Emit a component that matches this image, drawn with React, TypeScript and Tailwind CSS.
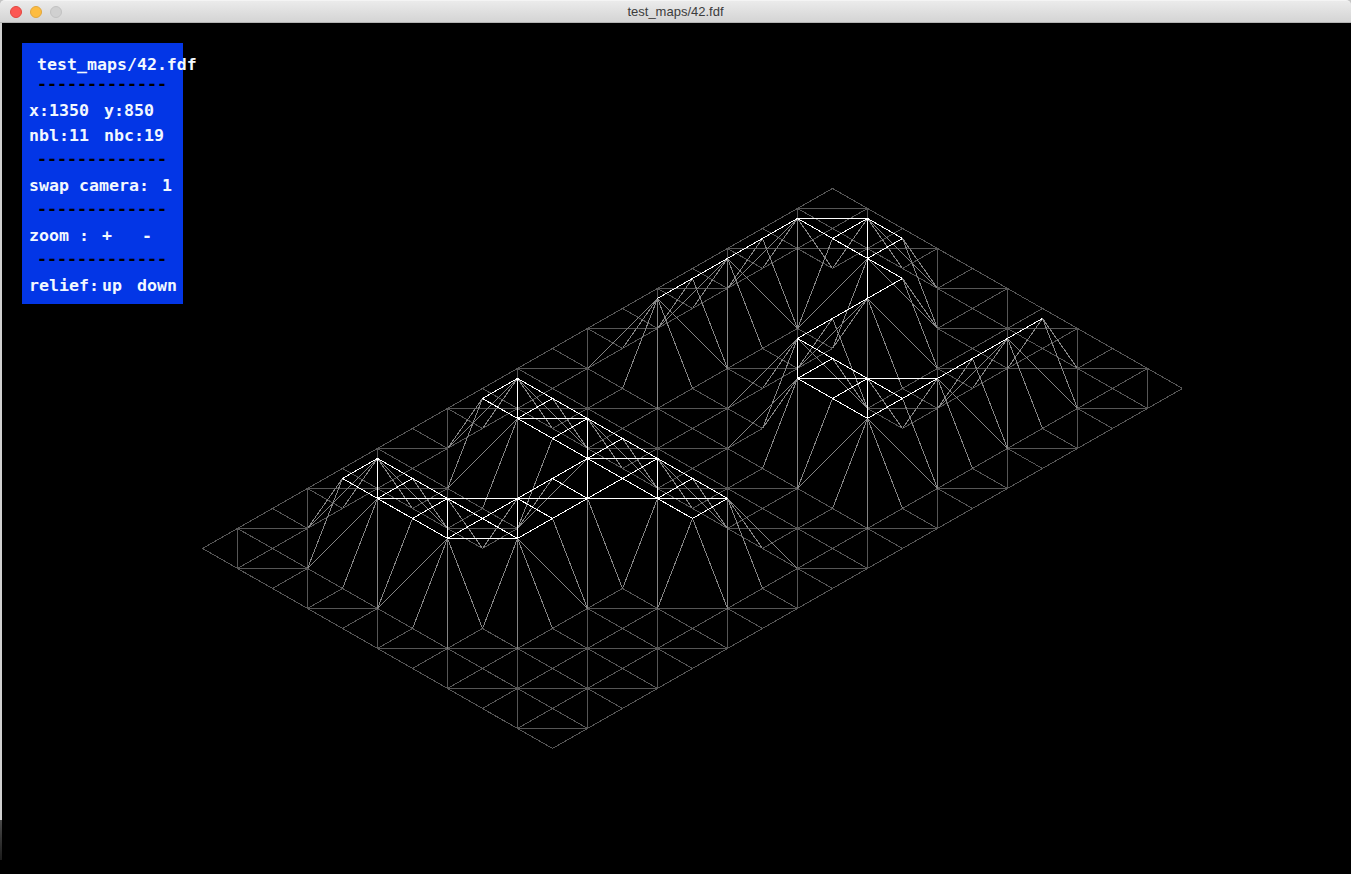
const MAP = [
  "0000000000000000000",
  "0000000000000000000",
  "0011001100011111000",
  "0011001100000001100",
  "0011001100000001100",
  "0011111100001111000",
  "0001111100011000000",
  "0000001100011000000",
  "0000001100011111100",
  "0000000000000000000",
  "0000000000000000000",
].map((row) => row.split("").map(Number));

const ROWS = MAP.length;
const COLS = MAP[0].length;

function project(r: number, c: number) {
  return {
    x: 202.5 + 35 * (c + r),
    y: 548.5 + 20 * (r - c) - 70 * MAP[r][c],
  };
}

type Edge = { a: [number, number]; b: [number, number]; level: number };

function buildEdges() {
  const edges: Edge[] = [];
  const push = (r1: number, c1: number, r2: number, c2: number) => {
    edges.push({ a: [r1, c1], b: [r2, c2], level: MAP[r1][c1] + MAP[r2][c2] });
  };
  for (let r = 0; r < ROWS; r++) {
    for (let c = 0; c < COLS; c++) {
      if (c + 1 < COLS) push(r, c, r, c + 1);
      if (r + 1 < ROWS) push(r, c, r + 1, c);
      if (r + 1 < ROWS && c + 1 < COLS) {
        // one diagonal per cell, alternating like a checkerboard
        if ((r + c) % 2 === 0) push(r + 1, c, r, c + 1);
        else push(r, c, r + 1, c + 1);
      }
    }
  }
  return edges.sort((e1, e2) => e1.level - e2.level);
}

const STROKES = ["#565656", "#858585", "#ffffff"];

function Wireframe() {
  return (
    <svg className="absolute inset-0 h-full w-full" viewBox="2 23 1349 851" fill="none" shapeRendering="crispEdges">
      {buildEdges().map((e, i) => {
        const p = project(e.a[0], e.a[1]);
        const q = project(e.b[0], e.b[1]);
        return <line key={i} x1={p.x} y1={p.y} x2={q.x} y2={q.y} stroke={STROKES[e.level]} strokeWidth={1} />;
      })}
    </svg>
  );
}

function Dashes() {
  return <div className="mt-[-1px] pl-2 text-black">-------------</div>;
}

function Panel() {
  return (
    <div className="relative ml-5 mt-5 h-[261px] w-[161px] bg-[#0336e6] pl-[7px] pt-2.5 font-['DejaVu_Sans_Mono',monospace] text-[16.6px] font-bold leading-6 whitespace-pre text-[#f2f8ff]">
      <div className="pl-2">test_maps/42.fdf</div>
      <div className="mt-[-5px] pl-2 text-black">-------------</div>
      <div className="mt-[3px] flex">
        <span className="w-[75px]">x:1350</span>
        <span>y:850</span>
      </div>
      <div className="mt-px flex">
        <span className="w-[75px]">nbl:11</span>
        <span>nbc:19</span>
      </div>
      <Dashes />
      <div className="mt-[3px] flex">
        <span className="w-[133px]">swap camera:</span>
        <span>1</span>
      </div>
      <Dashes />
      <div className="mt-[3px] flex">
        <span className="w-[73px]">zoom :</span>
        <span className="w-10">+</span>
        <span>-</span>
      </div>
      <Dashes />
      <div className="mt-[3px] flex">
        <span className="w-[73px]">relief:</span>
        <span className="w-[35px]">up</span>
        <span>down</span>
      </div>
    </div>
  );
}

function TitleBar() {
  return (
    <div className="shrink-0 bg-[#c4c4c4]">
      <div className="relative flex h-[23px] items-center justify-center rounded-t-[5px] border-t border-b border-t-[#f4f4f4] border-b-[#b4b4b4] bg-gradient-to-b from-[#ebebeb] to-[#d4d4d4]">
        <div className="absolute left-2.5 flex items-center gap-2">
          <span className="h-3 w-3 rounded-full border border-[#e2463f] bg-[#fc5753]" />
          <span className="h-3 w-3 rounded-full border border-[#e1a73e] bg-[#fdbc40]" />
          <span className="h-3 w-3 rounded-full border border-[#c2c2c2] bg-[#d0d0d0]" />
        </div>
        <span className="font-['Liberation_Sans',sans-serif] text-[13px] text-[#3c3c3c]">test_maps/42.fdf</span>
      </div>
    </div>
  );
}

export default function App() {
  return (
    <div className="flex h-[874px] w-[1351px] flex-col overflow-hidden bg-black">
      <TitleBar />
      <div className="flex min-h-0 flex-1">
        <div className="flex w-0.5 shrink-0 flex-col">
          <div className="h-[797px] bg-[#d0d0d0]" />
          <div className="h-10 bg-gradient-to-b from-[#4a4a4a] to-[#1c1c1c]" />
        </div>
        <div className="relative flex-1">
          <Wireframe />
          <Panel />
        </div>
      </div>
    </div>
  );
}
